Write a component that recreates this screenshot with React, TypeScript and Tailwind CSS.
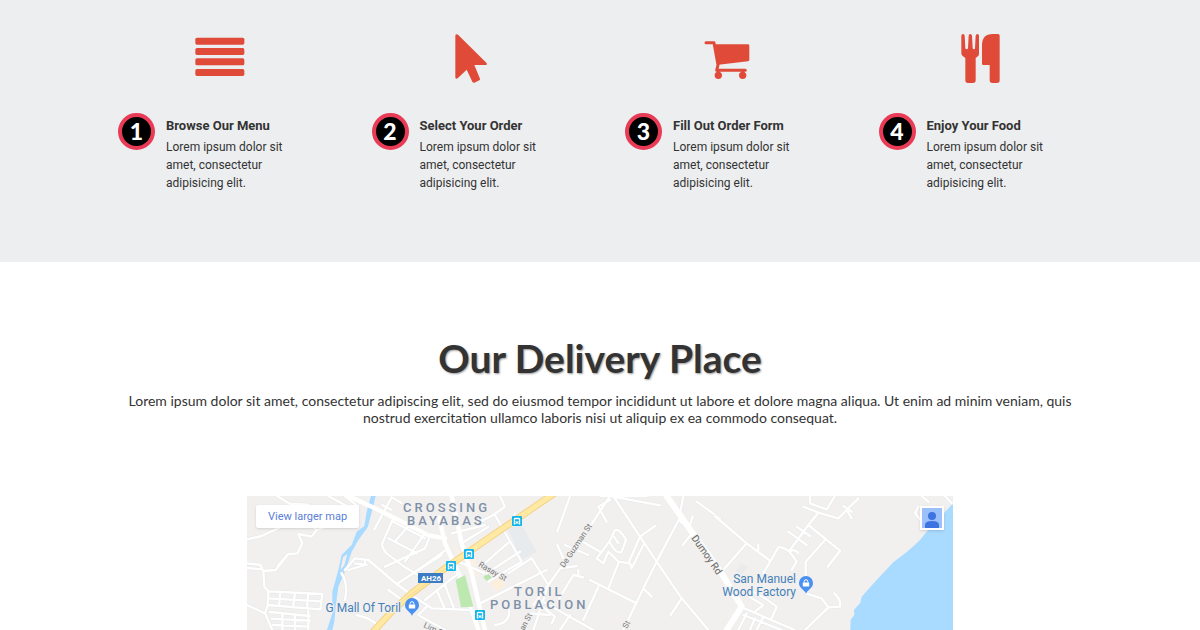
import type { ReactNode } from 'react'

const MenuIcon = () => (
  <>
    <rect x="1" y="14" width="147" height="21" rx="5" />
    <rect x="1" y="45" width="147" height="21" rx="5" />
    <rect x="1" y="76" width="147" height="21" rx="5" />
    <rect x="1" y="108" width="147" height="21" rx="5" />
  </>
)

const CursorIcon = () => (
  <path d="M22 8Q23 1 30 5L115 89Q119 96 112 96H79L96 137Q97 140 94 142L79 149Q75 150 73 146L56 110L29 136Q24 139 22 134Z" />
)

const CartIcon = () => (
  <>
    <path d="M40 34H138Q142 34 142 38V80Q142 84 138 85L50 95Z" />
    <path
      d="M12 29H36L48 96L44 112H130M122 112V126M49 112V126"
      fill="none"
      stroke="currentColor"
      strokeWidth="9"
      strokeLinecap="round"
      strokeLinejoin="round"
    />
    <circle cx="49" cy="127" r="11" />
    <circle cx="122" cy="127" r="11" />
  </>
)

const CutleryIcon = () => (
  <g transform="translate(3 1)">
    <path d="M16 7Q16 2 21 2Q25 2 26 7L28 45Q29 48 32 48Q35 48 36 45L38 7Q38 2 43 2Q47 2 48 7L50 45Q51 48 54 48Q57 48 57 45L59 7Q60 2 64 2Q69 2 69 7V62Q69 67 64 70L59 74V141Q59 149 51 149H36Q28 149 28 141V74L20 68Q16 65 16 60Z" />
    <path d="M78 36Q78 2 110 2H126Q131 2 131 7V141Q131 149 123 149H109Q101 149 101 141V95H82Q78 95 78 91Z" />
  </g>
)

const steps: { title: string; icon: ReactNode }[] = [
  { title: 'Browse Our Menu', icon: <MenuIcon /> },
  { title: 'Select Your Order', icon: <CursorIcon /> },
  { title: 'Fill Out Order Form', icon: <CartIcon /> },
  { title: 'Enjoy Your Food', icon: <CutleryIcon /> },
]

// Road geometry is drawn at three times the label scale
const roadsWest = [
  'M6 148L50 138L110 110',
  'M96 18L135 42L190 44',
  'M340 66L290 40L250 18',
  'M340 50L300 18',
  'M335 60L260 105L215 120L200 140L160 132L172 160L158 190L130 192L92 240L55 243L58 290L70 304',
  'M130 192L100 225M215 120L190 100',
  'M6 220L45 224L55 243M6 234L50 238',
  'M70 304L232 312L226 358L68 345ZM68 325L228 334M106 306L102 348M150 309L144 352M190 310L186 352',
  'M6 345L60 370L82 420M68 345L60 370',
  'M75 366L195 378M80 386L195 392M84 405L190 410M112 370V420M150 375V420M190 362V420',
  'M440 22L388 118M440 22L470 40M412 45L440 60',
  'M445 85L412 160Q410 175 425 190L480 232L520 255',
  'M445 95L540 145M430 145L515 190M488 110L452 152M540 130L480 215',
  'M555 138L540 175L420 230M600 182L460 280',
  'M300 240L330 205L370 210L455 282L500 315L560 355L680 360',
  'M310 240L360 225L360 212M330 220L365 225',
  'M290 250Q310 280 300 330M455 282L590 195',
  'M430 300L465 325M540 330L640 250M575 300L600 358M600 285L628 358',
  'M520 375L600 420M335 375Q380 385 395 405M520 375L545 350',
  'M620 130L720 105M640 215L720 250M650 160L730 110',
]

const roadsCenter = [
  'M0 340L200 240M0 232L85 158M20 250L120 185M85 250L155 205L205 285L160 345',
  'M45 75L125 215L25 275M60 18L75 50L40 75L-10 100',
  'M105 70L90 110M270 18L232 125M360 18L500 18',
  'M390 18L330 110L205 285L160 420M400 18L480 140L530 215L605 325L685 420',
  'M390 18L540 46M390 30L355 50L380 95',
  'M255 165L325 195M240 235L290 228M232 165L250 205M300 150L360 185',
  'M405 120Q420 115 438 150L425 185Q410 195 388 155ZM402 140L415 160M388 155L350 205L370 220L385 185L415 215L450 220L455 235L490 165',
  'M525 108L480 140L445 220M415 220L385 295M330 270L470 340',
  'M610 18L596 90L530 215L490 295L430 420M490 295L515 320M605 325L572 375',
  'M596 90L640 125L608 165M638 80L630 105M650 35L720 85',
  'M235 330L280 255L310 262M295 240V258M180 330L340 420M355 290L310 390M270 375L240 420',
  'M45 405Q90 400 88 360M180 345L225 380L215 400M150 370L210 375',
]

const roadsEast = [
  'M0 78L95 160L165 212M95 160L20 245M130 165V180',
  'M145 250L190 172Q215 165 245 215L230 240M225 185Q240 175 250 190',
  'M360 18L335 58L285 40V18M265 50L310 68L280 105L225 180M310 68L370 85L430 25M395 60L410 85M385 48L410 65',
  'M280 105L375 182L338 230M330 150L272 215V310M220 125L275 165M245 110L285 138',
  'M272 310L320 325L340 352L375 350Q380 330 358 310M340 352L270 420',
  'M105 300L150 325L185 350L170 385M90 310L110 325L145 345L120 365',
  'M75 350L240 420M85 375L200 420M95 370L70 420M120 385L105 420M145 380L125 420',
  'M610 50L600 70L625 100M640 35L620 18M690 18L710 40',
]

function Roads({ lines }: { lines: string[] }) {
  return (
    <>
      <path d={lines.join('')} stroke="#e6e7e8" strokeWidth="10" />
      <path d={lines.join('')} stroke="#fff" strokeWidth="7" />
    </>
  )
}

function BusStop({ x, y }: { x: number; y: number }) {
  return (
    <g transform={`translate(${x} ${y})`}>
      <rect x="-5" y="-5" width="10" height="10" rx="1" fill="#12b5ee" />
      <path d="M-3.2 3.5V-2.2L-2.2 -3.2H2.2L3.2 -2.2V3.5H1.8V2.6H-1.8V3.5Z" fill="#fff" />
      <path d="M-2 -1.8H2V.5H-2ZM-2.2 1.3H-1V2H-2.2ZM1 1.3H2.2V2H1Z" fill="#12b5ee" />
    </g>
  )
}

function ShopPin({ x, y }: { x: number; y: number }) {
  return (
    <g transform={`translate(${x} ${y})`}>
      <path d="M0 10C-1 6-7 4.500-7-1A7 7 0 1 1 7-1C7 4.500 1 6 0 10Z" fill="#4a90f0" />
      <path d="M-3.200-1.500H3.200V2.500H-3.200Z" fill="#fff" />
      <path d="M-1.800-1.500V-2.500A1.800 1.800 0 0 1 1.800-2.500V-1.500" fill="none" stroke="#fff" />
    </g>
  )
}

function DeliveryMap() {
  return (
    <div className="relative mx-auto w-[706px] max-w-full overflow-hidden bg-[#f1f0ef]">
      <svg viewBox="0 0 706 134" className="block w-full font-['Roboto',sans-serif]" role="img" aria-label="Toril">
        <g transform="translate(-2 -6) scale(.33333)" fill="none" strokeLinecap="round" strokeLinejoin="round">
          <path d="M790 120L825 95L875 185L830 210Z" fill="#e8ebee" />
          <path d="M730 270L755 250L780 285L755 305Z" fill="#fcefdc" />
          <path d="M615 150L650 190L690 200L700 260L660 235Z" fill="#fbf0e4" />
          <path d="M715 262L728 250L742 264L728 276Z" fill="#b9e6ad" />
          <path d="M1470 245L1490 220L1510 232L1490 252Z" fill="#ebebeb" />
          <path
            d="M378 18H392L378 75L368 112L340 150L320 185L300 245L280 290L272 350L268 395L262 420H246L262 370L262 305L280 240L290 195L320 165L335 125L358 108L365 65Z"
            fill="#a9daff"
          />
          <path d="M294 202L307 192L298 226L286 240Z" fill="#f1f0ef" />
          <path
            d="M2124 40L2045 125L2025 150Q1995 180 1945 217L1890 275L1850 320L1846 338L1827 360L1828 375L1817 390L1816 420H2124Z"
            fill="#a9daff"
          />
          <Roads lines={roadsWest} />
          <g transform="translate(705 0)">
            <Roads lines={roadsCenter} />
          </g>
          <g transform="translate(1410 0)">
            <Roads lines={roadsEast} />
          </g>
          <path
            d="M310 18L390 55L470 95L550 136L600 145M582 82L600 160L650 270L700 420M620 18L650 160L680 250L720 420"
            stroke="#fff"
            strokeWidth="13"
          />
          <path d="M1265 18L1340 125L1430 250L1490 350L1445 420" stroke="#fff" strokeWidth="18" />
          <path d="M632 270L660 255L685 350L648 352Z" fill="#bde8b0" />
          <path d="M380 430L440 365L500 310L600 235L720 152L925 12" stroke="#f4d28a" strokeWidth="21" />
          <path d="M380 430L440 365L500 310L600 235L720 152L925 12" stroke="#ffe9a3" strokeWidth="15" />
          <path d="M480 328L600 237L640 210" stroke="#f4d28a" strokeWidth="2" />
        </g>

        <g className="fill-[#7f90a8] text-[13px] font-medium tracking-[3px]" stroke="#f1f0ef" strokeWidth="2" paintOrder="stroke">
          <text x="156" y="16">CROSSING</text>
          <text x="160" y="29">BAYABAS</text>
          <text x="267" y="100">TORIL</text>
          <text x="243" y="113">POBLACION</text>
        </g>

        <g className="fill-[#4680b8] text-[12px]" stroke="#f1f0ef" strokeWidth="2" paintOrder="stroke">
          <text x="154" y="116" textAnchor="end">G Mall Of Toril</text>
          <text x="549" y="87" textAnchor="end">San Manuel</text>
          <text x="549" y="100" textAnchor="end">Wood Factory</text>
        </g>

        <g className="fill-[#777777] text-[8px]" stroke="#f1f0ef" strokeWidth="2" paintOrder="stroke">
          <text transform="translate(317 72) rotate(-56)">De Guzman St</text>
          <text transform="translate(231 70) rotate(30)">Rasay St</text>
          <text transform="translate(176 131) rotate(25)">Lim St</text>
          <text transform="translate(277 135) rotate(-62)">an St</text>
          <text transform="translate(380 133) rotate(-62)">St</text>
          <text className="fill-[#666666] text-[10px]" transform="translate(444 42) rotate(55)">
            Dumoy Rd
          </text>
        </g>

        <rect x="171" y="77" width="25" height="10" fill="#3b7cc4" />
        <text x="184" y="85" textAnchor="middle" className="fill-white text-[8px] font-bold">AH26</text>

        <BusStop x={270} y={25} />
        <BusStop x={222} y={58} />
        <BusStop x={204} y={70} />
        <BusStop x={233} y={119} />
        <ShopPin x={165} y={110} />
        <ShopPin x={559} y={88} />
      </svg>

      <a
        href="#map"
        className="absolute top-[9px] left-[9px] rounded-xs bg-white px-3 py-1 font-['Roboto',sans-serif] text-[11px] leading-[15px] text-[#5b80d8] shadow-sm"
      >
        View larger map
      </a>
      <button type="button" aria-label="Sign in" className="absolute top-[10px] right-[9px] bg-white p-[2px] shadow-sm">
        <svg viewBox="0 0 20 20" className="size-5">
          <path d="M0 0H20V20H0Z" fill="#9cc0fa" />
          <circle cx="10" cy="8" r="4" fill="#3d74e0" />
          <path d="M3 20V17Q3 13 10 13Q17 13 17 17V20Z" fill="#3d74e0" />
        </svg>
      </button>
    </div>
  )
}

export default function App() {
  return (
    <main className="bg-white text-[#333333]">
      <section className="bg-[#edeef0] px-[93px] pt-[33px] pb-[70px] font-['Roboto',sans-serif]">
        <ol className="grid grid-cols-4">
          {steps.map((step, i) => (
            <li key={step.title} className="px-[25px]">
              <svg viewBox="0 0 150 150" className="mx-auto size-[50px] text-[#e04b39]" fill="currentColor" aria-hidden>
                {step.icon}
              </svg>
              <div className="mt-[30px] flex items-start gap-[11px]">
                <span className="flex size-[37px] shrink-0 items-center justify-center rounded-full border-4 border-[#e93b56] bg-black font-['Lato',sans-serif] text-[23px] leading-none font-black text-white">
                  {i + 1}
                </span>
                <div className="pt-[3px] pr-7">
                  <h3 className="text-[13px] leading-5 font-bold">{step.title}</h3>
                  <p className="mt-[2px] text-[12px] leading-[18px]">
                    Lorem ipsum dolor sit amet, consectetur adipisicing elit.
                  </p>
                </div>
              </div>
            </li>
          ))}
        </ol>
      </section>

      <section className="pt-[72px] font-['Lato',sans-serif]">
        <h2 className="text-center text-[39px] leading-[48px] font-bold [text-shadow:1px_1px_2px_#999999]">
          Our Delivery Place
        </h2>
        <p className="mx-auto mt-[10px] mb-[70px] max-w-[960px] text-center text-[14px] leading-[17px]">
          Lorem ipsum dolor sit amet, consectetur adipiscing elit, sed do eiusmod tempor incididunt ut labore et dolore
          magna aliqua. Ut enim ad minim veniam, quis nostrud exercitation ullamco laboris nisi ut aliquip ex ea commodo
          consequat.
        </p>
        <DeliveryMap />
      </section>
    </main>
  )
}
